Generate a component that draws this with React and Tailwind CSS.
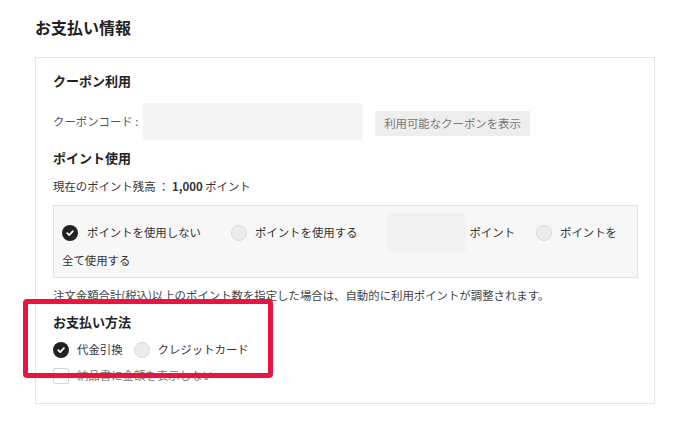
import React from "react";

const font = { fontFamily: '"Noto Sans CJK JP", "Noto Sans", sans-serif' };

function RadioOn() {
  return (
    <span className="flex h-[16px] w-[16px] shrink-0 items-center justify-center rounded-full bg-[#222]">
      <svg width="10" height="10" viewBox="0 0 10 10">
        <path d="M2.2 5.2 L4.2 7.1 L7.9 3.1" fill="none" stroke="#fff" strokeWidth="1.8" strokeLinecap="round" strokeLinejoin="round" />
      </svg>
    </span>
  );
}

function RadioOff() {
  return <span className="block h-[16px] w-[16px] shrink-0 rounded-full border border-[#d8d8d8] bg-[#ececec]" />;
}

export default function App() {
  return (
    <div className="relative h-[430px] w-[690px] overflow-hidden bg-white text-[#333]" style={font}>
      <div className="pl-[35px] pt-[15px]">
        <h1 className="text-[16px] font-bold leading-[24px] text-[#222]">お支払い情報</h1>
        <div className="mt-[18px] w-[620px] border border-[#e6e6e6] pb-[19px] pl-[17px] pt-[13px]">
          <h2 className="text-[13px] font-bold leading-[20px] text-[#222]">クーポン利用</h2>
          <div className="mt-[12px] flex h-[37px] items-center text-[11.4px]">
            <span className="w-[90px] text-[#555]">クーポンコード :</span>
            <div className="h-[37px] w-[220px] rounded-[2px] bg-[#f4f4f4]" />
            <div className="ml-[12px] mt-[4px] flex h-[25px] w-[155px] items-center justify-center bg-[#eeeeee] text-[#777]">
              利用可能なクーポンを表示
            </div>
          </div>
          <h2 className="mt-[8px] text-[13px] font-bold leading-[20px] text-[#222]">ポイント使用</h2>
          <p className="mt-[8px] text-[11.4px] leading-[20px]">
            現在のポイント残高 ： <span className="font-bold">1,000</span> ポイント
          </p>
          <div className="mt-[9px] w-[585px] border border-[#e3e3e3] bg-[#f7f7f7] pb-[9px] pl-[8px] pt-[7px] text-[11.4px]">
            <div className="flex h-[39px] items-center">
              <RadioOn />
              <span className="ml-[9px]">ポイントを使用しない</span>
              <span className="ml-[30px]"><RadioOff /></span>
              <span className="ml-[8px]">ポイントを使用する</span>
              <div className="ml-[30px] h-[39px] w-[79px] rounded-[2px] bg-[#f2f2f2]" />
              <span className="ml-[3px]">ポイント</span>
              <span className="ml-[21px]"><RadioOff /></span>
              <span className="ml-[8px]">ポイントを</span>
            </div>
            <div className="leading-[16px]">全て使用する</div>
          </div>
          <p className="mt-[7px] text-[11.4px] leading-[20px] text-[#444]">
            注文金額合計(税込)以上のポイント数を指定した場合は、自動的に利用ポイントが調整されます。
          </p>
          <h2 className="mt-[7px] text-[13px] font-bold leading-[20px] text-[#222]">お支払い方法</h2>
          <div className="mt-[8px] flex h-[20px] items-center text-[11.4px]">
            <RadioOn />
            <span className="ml-[8px]">代金引換</span>
            <span className="ml-[11px]"><RadioOff /></span>
            <span className="ml-[8px]">クレジットカード</span>
          </div>
          <div className="mt-[8px] flex h-[16px] items-center text-[11.4px]">
            <span className="block h-[16px] w-[16px] rounded-[2px] border border-[#d5d5d5] bg-white" />
            <span className="ml-[8px] text-[#777]">納品書に金額を表示しない</span>
          </div>
        </div>
      </div>
      <div className="pointer-events-none absolute left-[23px] top-[299px] h-[79px] w-[250px] rounded-[4px] border-[5px] border-[#e9143f]" />
    </div>
  );
}
